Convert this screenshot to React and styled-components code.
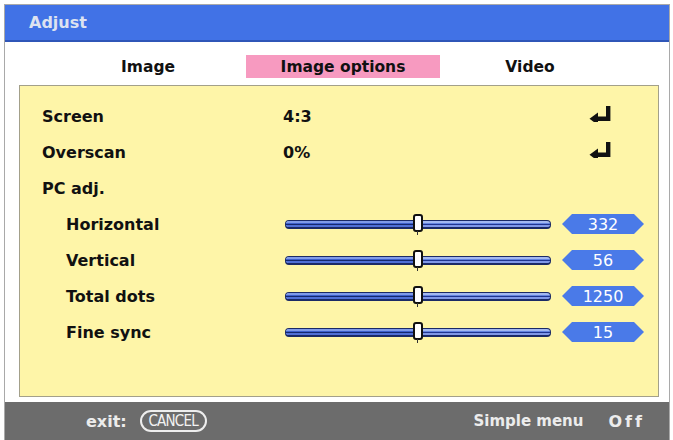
import styled, { createGlobalStyle } from 'styled-components';

const GlobalStyle = createGlobalStyle`
    html, body {
        margin: 0;
        padding: 0;
        background: #ffffff;
    }
    body {
        font-family: 'DejaVu Sans', 'Liberation Sans', sans-serif;
    }
`;

const tabs = ['Image', 'Image options', 'Video'];

const items = [
    { label: 'Screen', value: '4:3', enter: true },
    { label: 'Overscan', value: '0%', enter: true },
    { label: 'PC adj.' },
    { label: 'Horizontal', sub: true, level: 0.5, badge: '332' },
    { label: 'Vertical', sub: true, level: 0.5, badge: '56' },
    { label: 'Total dots', sub: true, level: 0.5, badge: '1250' },
    { label: 'Fine sync', sub: true, level: 0.5, badge: '15' },
];

// bold return-key arrow used for "press enter" rows
function EnterIcon() {
    return (
        <svg width="23" height="16" viewBox="0 0 23 16">
            <path d="M17 0h4.4v15H8.5V10.6H17z" fill="#111" />
            <path d="M0.5 12.8 L9 6.6 L9 19 Z" fill="#111" />
        </svg>
    );
}

function Slider({ level }) {
    return (
        <Track>
            <TrackFill style={{ width: `${level * 100}%` }} />
            <Knob style={{ left: `${level * 100}%` }} />
        </Track>
    );
}

export default function App() {
    return (
        <>
            <GlobalStyle />
            <Page>
                <Frame>
                    <TitleBar>Adjust</TitleBar>
                    <Body>
                        <Tabs>
                            {tabs.map((t, i) => (
                                <Tab key={t} active={i === 1}>{t}</Tab>
                            ))}
                        </Tabs>
                        <Panel>
                            {items.map(item => (
                                <Row key={item.label}>
                                    <Label sub={item.sub}>{item.label}</Label>
                                    {item.value && <Value>{item.value}</Value>}
                                    {item.enter && <EnterSlot><EnterIcon /></EnterSlot>}
                                    {item.badge && (
                                        <>
                                            <Slider level={item.level} />
                                            <Badge>{item.badge}</Badge>
                                        </>
                                    )}
                                </Row>
                            ))}
                        </Panel>
                    </Body>
                    <Footer>
                        <FooterText>exit:</FooterText>
                        <CancelKey>CANCEL</CancelKey>
                        <Spacer />
                        <FooterText small>Simple menu</FooterText>
                        <OffText>Off</OffText>
                    </Footer>
                </Frame>
            </Page>
        </>
    );
}

// styled components
const Page = styled.div`
    box-sizing: border-box;
    width: 673px;
    height: 440px;
    padding: 4px 3px 0 4px;
    overflow: hidden;
`;

const Frame = styled.div`
    box-sizing: border-box;
    width: 666px;
    height: 436px;
    display: flex;
    flex-direction: column;
    border: 1px solid #a9a9a9;
    border-bottom: none;
`;

const TitleBar = styled.div`
    height: 37px;
    flex-shrink: 0;
    display: flex;
    align-items: center;
    padding-left: 24px;
    background: #4172e6;
    border-bottom: 2px solid #2f56b8;
    box-sizing: border-box;
    color: #dde2f0;
    font-size: 16px;
    font-weight: bold;
`;

const Body = styled.div`
    flex: 1;
    display: flex;
    flex-direction: column;
    padding: 0 10px 5px 14px;
    background: #ffffff;
`;

const Tabs = styled.div`
    height: 43px;
    flex-shrink: 0;
    display: grid;
    grid-template-columns: 196px 194px 180px;
    align-items: end;
    padding: 0 0 7px 31px;
    box-sizing: border-box;
`;

const Tab = styled.div`
    height: 23px;
    display: flex;
    align-items: center;
    justify-content: center;
    background: ${p => (p.active ? '#f79ac0' : 'transparent')};
    color: #111111;
    font-size: 15.5px;
    font-weight: bold;
`;

const Panel = styled.div`
    flex: 1;
    padding: 12px 13px 0 22px;
    background: #fef5a8;
    border: 1px solid #a3a08a;
`;

const Row = styled.div`
    height: 36px;
    display: flex;
    align-items: center;
    color: #111111;
    font-size: 16px;
    font-weight: bold;
`;

const Label = styled.div`
    box-sizing: border-box;
    width: 241px;
    flex-shrink: 0;
    padding-left: ${p => (p.sub ? '24px' : '0')};
`;

const Value = styled.div`
    flex: 1;
`;

const EnterSlot = styled.div`
    display: flex;
    margin-right: 33px;
    margin-top: -5px;
`;

const Track = styled.div`
    position: relative;
    width: 266px;
    height: 9px;
    margin-left: 2px;
    box-sizing: border-box;
    border-radius: 4px;
    border: 1px solid #1b2a66;
    border-bottom-width: 2px;
    background: linear-gradient(to bottom, #a3b8f0 0 2px, #6484e0 2px 3px, #203590 3px 4px, #8098e8 4px);
`;

const TrackFill = styled.div`
    position: absolute;
    left: 0;
    top: 0;
    bottom: 0;
    border-radius: 3px 0 0 3px;
    background: linear-gradient(to bottom, #7f9ae8 0 2px, #3d5fcc 2px 3px, #15286e 3px 4px, #4f6fd6 4px);
`;

const Knob = styled.div`
    position: absolute;
    top: -7px;
    width: 10px;
    height: 18px;
    margin-left: -5px;
    box-sizing: border-box;
    background: #ffffff;
    border: 2px solid #111111;
    border-radius: 3px;
    &::after {
        content: '';
        position: absolute;
        left: 2px;
        bottom: -5px;
        width: 1px;
        height: 4px;
        background: #333333;
    }
`;

const Badge = styled.div`
    width: 82px;
    height: 20px;
    margin-left: 11px;
    display: flex;
    align-items: center;
    justify-content: center;
    background: #4a7ae8;
    clip-path: polygon(0 50%, 10px 0, calc(100% - 10px) 0, 100% 50%, calc(100% - 10px) 100%, 10px 100%);
    color: #ffffff;
    font-size: 16px;
    font-weight: normal;
`;

const Footer = styled.div`
    height: 38px;
    flex-shrink: 0;
    display: flex;
    align-items: center;
    padding: 0 24px 0 81px;
    background: #6c6c6c;
`;

const FooterText = styled.span`
    color: #ececec;
    font-size: ${p => (p.small ? '15px' : '16px')};
    font-weight: bold;
`;

const CancelKey = styled.span`
    box-sizing: border-box;
    width: 67px;
    height: 22px;
    margin-left: 13px;
    display: flex;
    align-items: center;
    justify-content: center;
    border: 2px solid #eeeeee;
    border-radius: 11px;
    font-family: 'DejaVu Sans Condensed', 'Liberation Sans Narrow', sans-serif;
    font-size: 15px;
    font-weight: normal;
    letter-spacing: -0.8px;
    color: #f2f2f2;
`;

const Spacer = styled.div`
    flex: 1;
`;

const OffText = styled.span`
    margin-left: 25px;
    color: #ececec;
    font-size: 16px;
    font-weight: bold;
    letter-spacing: 3px;
`;
